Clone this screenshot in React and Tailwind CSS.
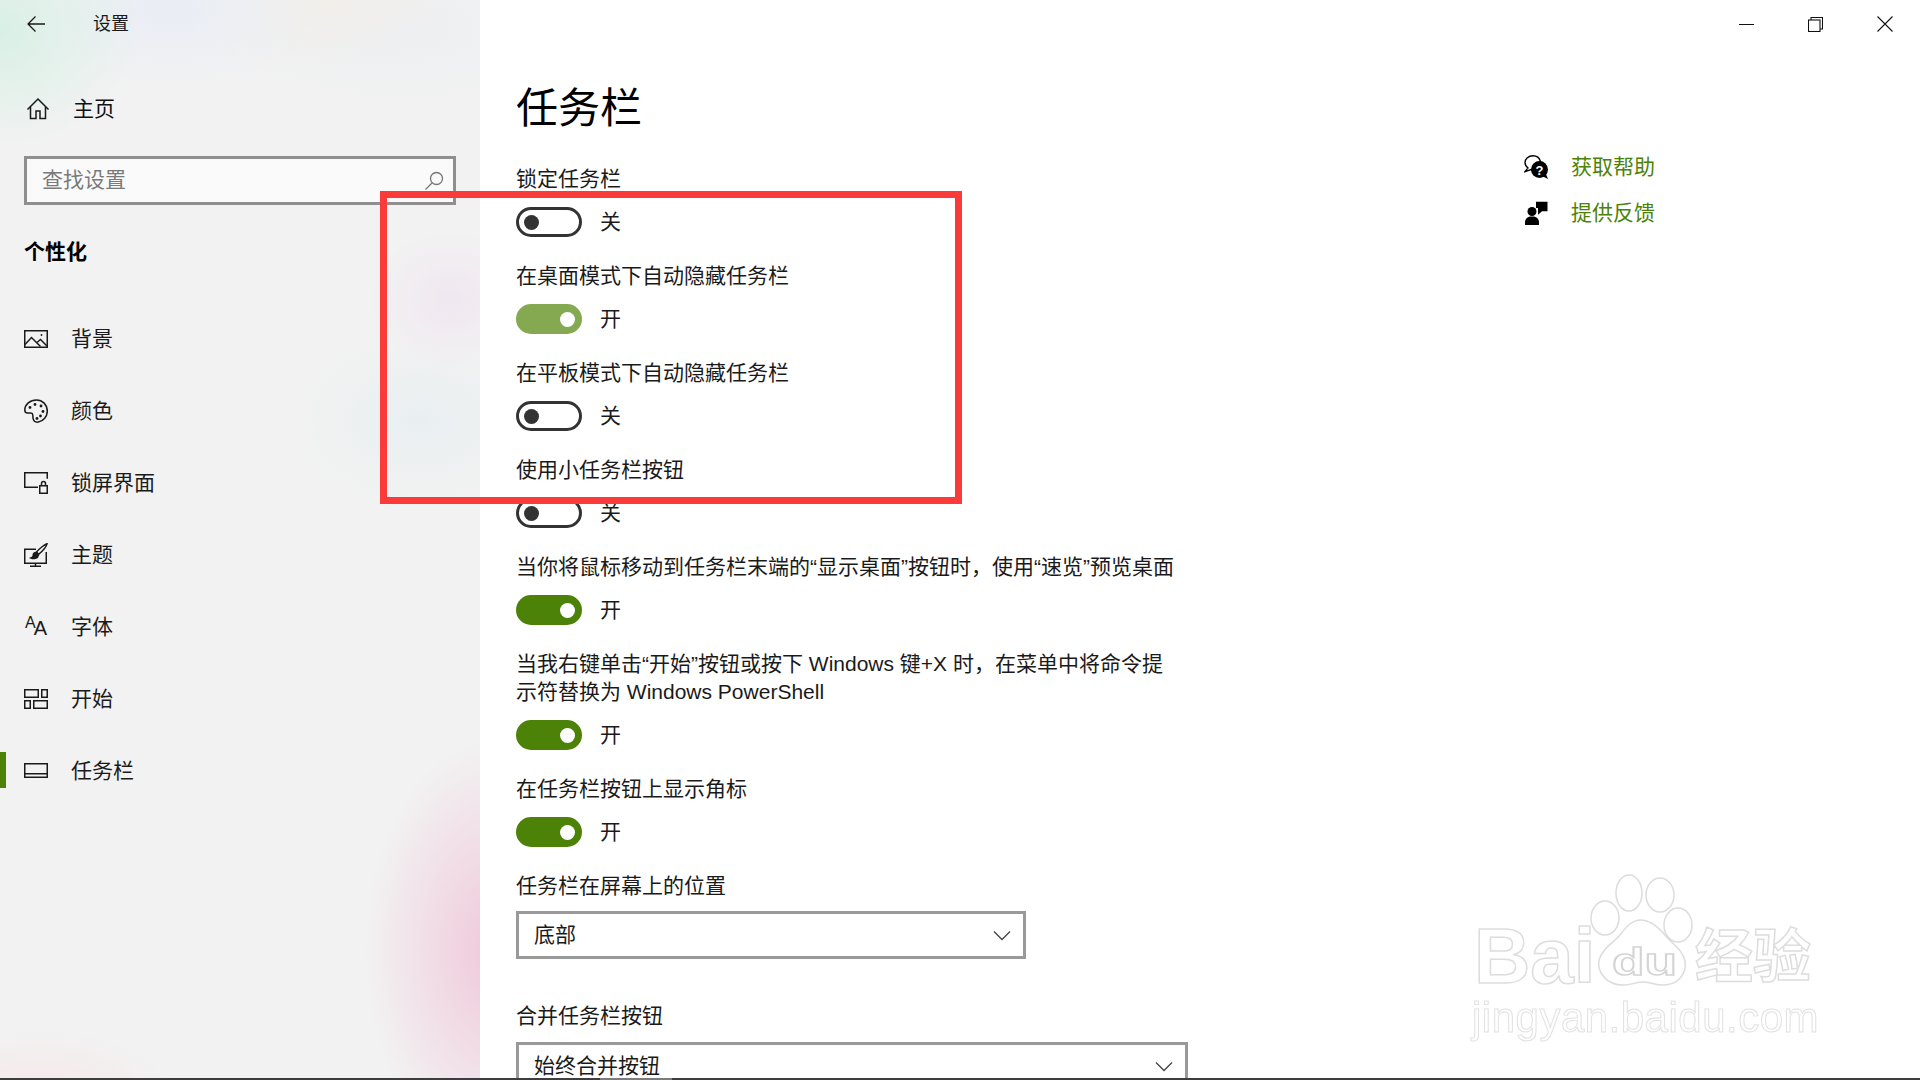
import React from 'react';

const LINK = 'text-[#4c8208]';

const Svg = ({ w = 24, h = 24, className = '', children }) => (
    <svg width={w} height={h} viewBox={`0 0 ${w} ${h}`} fill="none" stroke="currentColor" strokeWidth="1.5" className={`shrink-0 ${className}`}>
        {children}
    </svg>
);

const HomeIcon = () => (
    <Svg w={24} h={24}>
        <path d="M1.5 12.5 12 2l10.500 10.500" />
        <path d="M4.500 10v11.500h5.500v-7.500h4v7.500h5.500V10" />
    </Svg>
);
const ImageIcon = () => (
    <Svg>
        <rect x="0.750" y="3.750" width="22.500" height="16.500" />
        <path d="M1 17.500 7.500 10.500l9 9M13 15.500l3.500-3 6.500 6.500" />
        <circle cx="17.500" cy="8" r="0.900" fill="currentColor" stroke="none" />
    </Svg>
);
const PaletteIcon = () => (
    <Svg>
        <path d="M12.500 0.900C6 0.900 0.800 5.500 0.800 11c0 2 1 3 2.700 3 2 0 3.800-.6 4.800.6 1 1.300.2 3.200 1 5.800.8 2.500 2.900 3 5 2.700 5-.8 9-5.600 9-11.100C23.300 5.800 18.500 0.900 12.500 0.900Z" />
        <g fill="currentColor" stroke="none">
            <circle cx="6" cy="8.500" r="1.400" />
            <circle cx="11" cy="5.500" r="1.400" />
            <circle cx="17" cy="7" r="1.400" />
            <circle cx="19" cy="12.500" r="1.400" />
            <circle cx="16.500" cy="17" r="1.400" />
            <circle cx="13" cy="19.500" r="1.400" />
        </g>
    </Svg>
);
const LockScreenIcon = () => (
    <Svg>
        <path d="M14 16.250H0.750V1.750h22.500v6" />
        <rect x="15.750" y="14.750" width="7.500" height="7.500" />
        <path d="M17.500 14.500v-2a2 2 0 0 1 4 0v2" />
    </Svg>
);
const ThemeIcon = () => (
    <Svg>
        <path d="M12 6.250H0.750v14h21.500V9" />
        <path d="M11.500 20.500v3M6 23.250h11" />
        <path d="M23 .8c-2 .6-7.500 4.500-10.500 8.200l2.200 2.200C18.500 8 22.500 3 23 .8Z" />
        <path d="M12.200 9.500c-2 0-3 1.500-3 3 0 1-.8 2-2.200 2.500 2.500 1 7 .5 7.500-3.200Z" fill="currentColor" />
    </Svg>
);
const FontIcon = () => (
    <div className="flex h-6 w-6 items-end justify-center pb-px font-['Liberation_Sans',sans-serif] leading-none">
        <span className="mb-[7px] text-[16px]">A</span>
        <span className="-ml-0.5 text-[20px]">A</span>
    </div>
);
const StartIcon = () => (
    <Svg>
        <rect x="0.750" y="2.750" width="13.500" height="7.500" />
        <rect x="17.750" y="2.750" width="5.500" height="7.500" />
        <rect x="0.750" y="13.750" width="5.500" height="7.500" />
        <rect x="9.750" y="13.750" width="13.500" height="7.500" />
    </Svg>
);
const TaskbarIcon = () => (
    <Svg>
        <rect x="0.750" y="4.750" width="22.500" height="13.500" />
        <path d="M1 14.750h22" />
    </Svg>
);

const navItems = [
    { label: '背景', Icon: ImageIcon },
    { label: '颜色', Icon: PaletteIcon },
    { label: '锁屏界面', Icon: LockScreenIcon },
    { label: '主题', Icon: ThemeIcon },
    { label: '字体', Icon: FontIcon },
    { label: '开始', Icon: StartIcon },
    { label: '任务栏', Icon: TaskbarIcon, active: true },
];

const NavItem = ({ label, Icon, active }) => (
    <div className="relative flex h-[72px] items-center pl-6">
        {active && <div className="absolute left-0 top-[17px] h-9 w-1.5 bg-[#4c8208]" />}
        <Icon />
        <span className="ml-[23px]">{label}</span>
    </div>
);

const Sidebar = () => (
    <aside className="w-[480px] shrink-0 text-[#1a1a1a] bg-[#f2f2f2] bg-[radial-gradient(ellipse_140px_120px_at_0px_30px,#d9f0e6,transparent),radial-gradient(ellipse_150px_80px_at_170px_10px,#e9edf5,transparent),radial-gradient(ellipse_140px_70px_at_320px_0px,#f2eeea,transparent),radial-gradient(ellipse_190px_80px_at_400px_30px,#eceff1,transparent),radial-gradient(ellipse_80px_70px_at_450px_300px,#f0e7f0,transparent),radial-gradient(ellipse_130px_90px_at_420px_420px,#e9eff1,transparent),radial-gradient(ellipse_130px_210px_at_495px_950px,#f0c8da,transparent),radial-gradient(ellipse_130px_60px_at_40px_1090px,#f6e8e8,transparent)]">
        <div className="flex h-12 items-center">
            <svg width="20" height="18" viewBox="0 0 20 18" fill="none" stroke="currentColor" strokeWidth="1.300" className="ml-[26px]">
                <path d="M19 9H2M9.500 1.500 2 9l7.500 7.500" />
            </svg>
            <span className="ml-[47px] text-lg">设置</span>
        </div>
        <div className="mt-[25px] flex h-[72px] items-center pl-[26px]">
            <HomeIcon />
            <span className="ml-[23px] text-[#111]">主页</span>
        </div>
        <div className="ml-6 mt-[11px] flex h-[49px] w-[432px] items-center justify-between border-[3px] border-[#8f8f8f] bg-white/60 pl-[15px] pr-[9px]">
            <span className="-mt-0.5 text-[#7a7a7a]">查找设置</span>
            <svg width="20" height="20" viewBox="0 0 20 20" fill="none" stroke="#777" strokeWidth="1.300">
                <circle cx="12.500" cy="7.500" r="6" />
                <path d="M8 12 1.500 18.500" />
            </svg>
        </div>
        <h2 className="ml-6 mt-[31px] flex h-8 items-center font-bold text-black">个性化</h2>
        <nav className="mt-[35px]">
            {navItems.map((item) => (
                <NavItem key={item.label} {...item} />
            ))}
        </nav>
    </aside>
);

const Toggle = ({ on, dim }) => {
    if (!on) {
        return (
            <div className="flex h-[30px] w-[66px] items-center rounded-full border-[3px] border-[#333] pl-[5px]">
                <div className="h-[15px] w-[15px] rounded-full bg-[#333]" />
            </div>
        );
    }
    return (
        <div className={`flex h-[30px] w-[66px] items-center justify-end rounded-full pr-[7px] ${dim ? 'bg-[#84a951]' : 'bg-[#4c8208]'}`}>
            <div className="h-[15px] w-[15px] rounded-full bg-white" />
        </div>
    );
};

const Setting = ({ label, on, dim, twoLine }) => (
    <div className="mb-[23px]">
        <div className={twoLine ? 'w-[660px] pt-0.5 leading-7' : 'flex h-8 items-center'}>{label}</div>
        <div className={`flex h-[30px] items-center gap-[18px] ${twoLine ? 'mt-3.5' : 'mt-3'}`}>
            <Toggle on={on} dim={dim} />
            <span className="leading-[30px]">{on ? '开' : '关'}</span>
        </div>
    </div>
);

const Select = ({ value, width }) => (
    <div className={`flex h-12 items-center justify-between border-[3px] border-[#999] pl-[15px] pr-3 ${width}`}>
        <span className="leading-[30px]">{value}</span>
        <svg width="18" height="11" viewBox="0 0 18 11" fill="none" stroke="#444" strokeWidth="1.300">
            <path d="M1 1.500 9 9.500l8-8" />
        </svg>
    </div>
);

const HelpIcon = () => (
    <svg width="24" height="24" viewBox="0 0 24 24" className="shrink-0">
        <path d="M9 .8C4.500 .8 1 3.800 1 7.600c0 2.400 1.300 4.200 3 5.400L.8 16.800 7 14.500c2 .6 5 .4 7-1.500 2-2 3-4 2.500-6.500C15.500 3 12.500 .8 9 .8Z" fill="#fff" stroke="#000" strokeWidth="1.400" />
        <circle cx="15.500" cy="14.500" r="8.500" fill="#000" />
        <path d="M18 21 24 24 21.500 18Z" fill="#000" />
        <text x="15.500" y="19.500" textAnchor="middle" fontSize="13" fontWeight="700" fill="#fff" fontFamily="Liberation Sans">?</text>
    </svg>
);

const FeedbackIcon = () => (
    <svg width="24" height="24" viewBox="0 0 24 24" className="shrink-0">
        <circle cx="8" cy="10.500" r="4.500" fill="#000" />
        <path d="M1 24v-2.500C1 18 3.500 15.500 7 15.500h2c3.500 0 6 2.500 6 6V24Z" fill="#000" />
        <path d="M12 .8h11.500v9.500H18l-4 3.500v-6.800h-2Z" fill="#000" />
    </svg>
);

const HelpLinks = () => (
    <div className="pt-[96px]">
        <div className="flex h-[46px] items-center gap-[23px]">
            <HelpIcon />
            <span className={LINK}>获取帮助</span>
        </div>
        <div className="flex h-[46px] items-center gap-[23px]">
            <FeedbackIcon />
            <span className={LINK}>提供反馈</span>
        </div>
    </div>
);

const WindowControls = () => (
    <div className="flex h-12 shrink-0 items-center justify-end pr-px text-[#111]">
        <div className="flex w-[69px] justify-center">
            <div className="h-px w-[15px] bg-[#111]" />
        </div>
        <div className="flex w-[69px] justify-center">
            <svg width="15" height="15" viewBox="0 0 15 15" fill="none" stroke="currentColor" strokeWidth="1.100">
                <rect x="0.500" y="3" width="11.500" height="11.500" />
                <path d="M3 3V.5h11.500V12H12" />
            </svg>
        </div>
        <div className="flex w-[69px] justify-center">
            <svg width="16" height="16" viewBox="0 0 16 16" fill="none" stroke="currentColor" strokeWidth="1.100">
                <path d="M.5.5l15 15M15.500.5l-15 15" />
            </svg>
        </div>
    </div>
);

// Marca d'água fica por cima do conteúdo
const Watermark = () => (
    <div className="pointer-events-none absolute left-[1470px] top-[870px] h-[180px] w-[360px] select-none blur-[0.4px]">
        <svg width="360" height="120" viewBox="0 0 360 120" fill="#fff" stroke="#dcdcdc" strokeWidth="1.500" className="absolute left-0 top-0">
            <ellipse cx="135" cy="48" rx="14" ry="17" />
            <ellipse cx="159" cy="23" rx="13" ry="18" />
            <ellipse cx="190" cy="25" rx="14" ry="17" />
            <ellipse cx="208" cy="55" rx="14" ry="17" />
            <path d="M171 50c-9 0-15 7-21 15-7 8-18 14-21 25-2 13 8 25 24 25 9 0 13-3 20-3s12 3 20 3c14 0 24-10 22-24-2-11-13-17-20-26-7-8-15-15-24-15Z" />
        </svg>
        <span className="absolute left-1 top-[47px] font-['Liberation_Sans',sans-serif] text-[78px] font-bold leading-[78px] text-white [-webkit-text-stroke:1.500px_#dddddd]">Bai</span>
        <span className="absolute left-[142px] top-[73px] origin-left scale-x-[1.4] font-['Liberation_Sans',sans-serif] text-[38px] font-bold leading-[38px] text-white [-webkit-text-stroke:1.500px_#d4d4d4]">du</span>
        <span className="absolute left-[225px] top-[50px] font-['Noto_Sans_CJK_SC',sans-serif] text-[58px] font-bold leading-[64px] text-white [-webkit-text-stroke:1.500px_#dddddd]">经验</span>
        <span className="absolute left-[2px] top-[124px] font-['Liberation_Sans',sans-serif] text-[42px] leading-[48px] tracking-[0.500px] text-white [-webkit-text-stroke:1px_#e2e2e2]">jingyan.baidu.com</span>
    </div>
);

const App = () => (
    <div className="relative h-[1080px] w-[1920px] overflow-hidden bg-white font-['Liberation_Sans','Noto_Sans_CJK_SC',sans-serif] text-[21px] text-[#1a1a1a]">
        <div className="flex h-[1078px] overflow-hidden">
            <Sidebar />
            <main className="flex min-w-0 flex-1 flex-col">
                <WindowControls />
                <div className="flex pl-9">
                    <div className="w-[1008px] shrink-0">
                        <h1 className="mb-[27px] mt-8 flex h-14 items-center text-[42px] text-black">任务栏</h1>
                        <Setting label="锁定任务栏" />
                        <Setting label="在桌面模式下自动隐藏任务栏" on dim />
                        <Setting label="在平板模式下自动隐藏任务栏" />
                        <Setting label="使用小任务栏按钮" />
                        <Setting label="当你将鼠标移动到任务栏末端的“显示桌面”按钮时，使用“速览”预览桌面" on />
                        <Setting label="当我右键单击“开始”按钮或按下 Windows 键+X 时，在菜单中将命令提示符替换为 Windows PowerShell" on twoLine />
                        <Setting label="在任务栏按钮上显示角标" on />
                        <div className="flex h-8 items-center">任务栏在屏幕上的位置</div>
                        <div className="mt-[9px]">
                            <Select value="底部" width="w-[510px]" />
                        </div>
                        <div className="mt-[41px] flex h-8 items-center">合并任务栏按钮</div>
                        <div className="mt-2.5">
                            <Select value="始终合并按钮" width="w-[672px]" />
                        </div>
                    </div>
                    <HelpLinks />
                </div>
            </main>
        </div>
        <div className="flex h-0.5">
            <div className="w-[600px] bg-[#3d3d3d]" />
            <div className="w-[72px] bg-[#7c7c7c]" />
            <div className="flex-1 bg-[#3d3d3d]" />
        </div>
        <div className="pointer-events-none absolute left-[380px] top-[191px] h-[313px] w-[582px] border-[7px] border-[#fb3a3a]" />
        <Watermark />
    </div>
);

export default App;
